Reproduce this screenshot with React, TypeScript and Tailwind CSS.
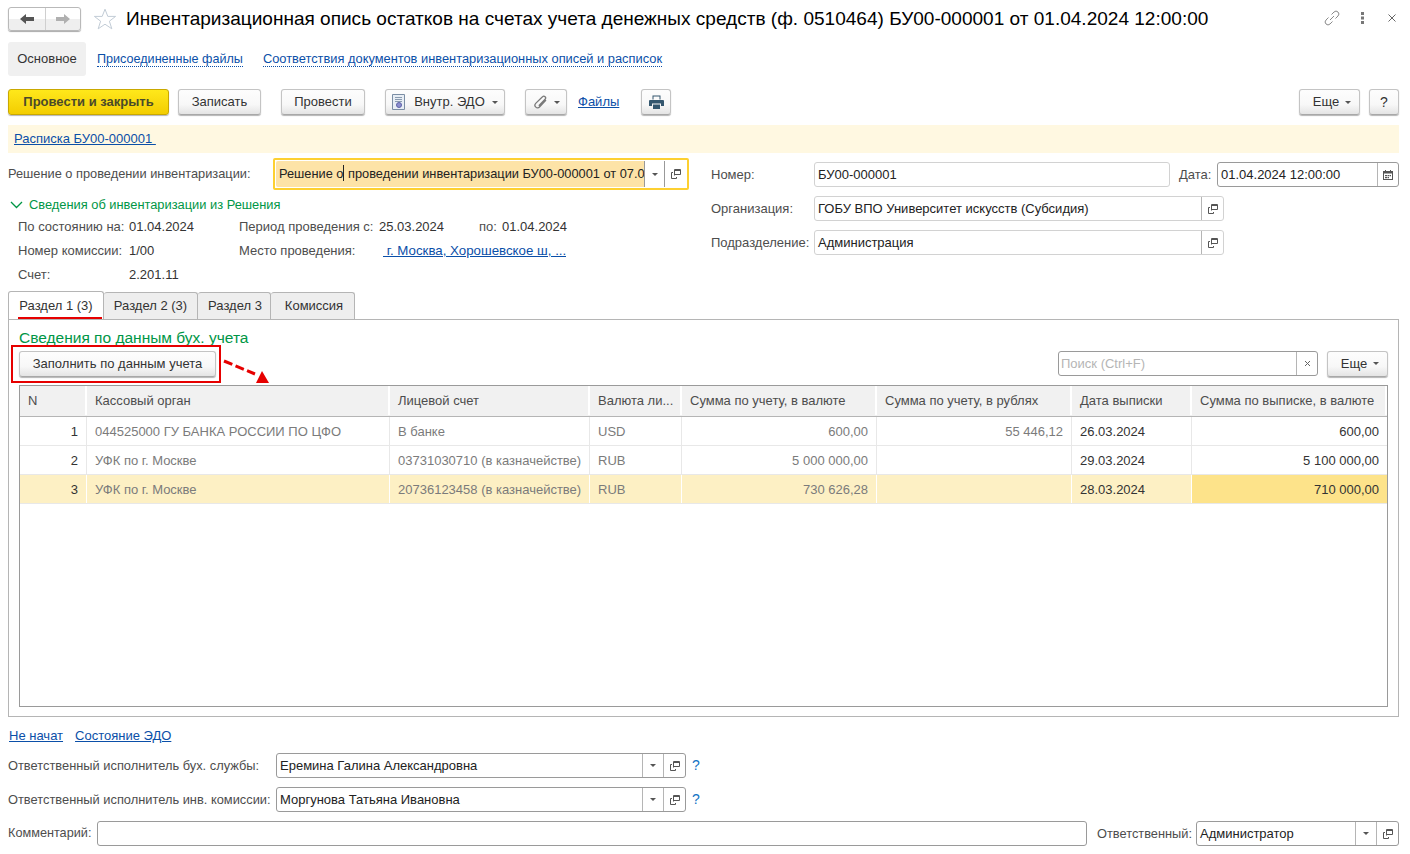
const btn =
  'flex h-[26px] items-center justify-center rounded-[3px] border border-[#c4c4c4] border-b-[#a8a8a8] bg-linear-to-b from-[#fdfdfd] via-[#f8f8f8] via-60% to-[#e4e4e4] text-[#333] shadow-[0_1px_1px_#b5b5b5]'
const link = 'text-[#0b4fa8] underline'

function Caret() {
  return <span className="h-0 w-0 border-x-[3px] border-t-[3px] border-x-transparent border-t-[#555]" />
}

function OpenIcon() {
  return (
    <svg width="10" height="10" viewBox="0 0 10 10" fill="none" stroke="#555" strokeWidth="1">
      <path d="M3.500 6.500V.5h6v5h-6" />
      <path d="M3 1.500h6" />
      <path d="M2 3.500H.5v6h5V8" />
    </svg>
  )
}

function CaretCell() {
  return (
    <span className="flex h-full w-[21px] flex-none items-center justify-center border-l border-[#b5b5b5]">
      <Caret />
    </span>
  )
}

function OpenCell() {
  return (
    <span className="flex h-full w-[22px] flex-none items-center justify-center border-l border-[#b5b5b5]">
      <OpenIcon />
    </span>
  )
}

function Field({ width, value, strong, select, open = true }: { width: string; value: string; strong?: boolean; select?: boolean; open?: boolean }) {
  return (
    <div className={`flex h-[25px] items-center rounded-[3px] border bg-white ${strong ? 'border-[#9a9a9a]' : 'border-[#d2d2d2]'} ${width}`}>
      <span className="min-w-0 flex-1 truncate pl-[3px] text-[#222]">{value}</span>
      {select && <CaretCell />}
      {open && <OpenCell />}
    </div>
  )
}

const columns = [
  { label: 'N', width: 'w-[67px]' },
  { label: 'Кассовый орган', width: 'w-[303px]' },
  { label: 'Лицевой счет', width: 'w-[200px]' },
  { label: 'Валюта ли...', width: 'w-[92px]' },
  { label: 'Сумма по учету, в валюте', width: 'w-[195px]' },
  { label: 'Сумма по учету, в рублях', width: 'w-[195px]' },
  { label: 'Дата выписки', width: 'w-[120px]' },
  { label: 'Сумма по выписке, в валюте', width: 'w-[195px]' },
]

const rows = [
  ['1', '044525000 ГУ БАНКА РОССИИ ПО ЦФО', 'В банке', 'USD', '600,00', '55 446,12', '26.03.2024', '600,00'],
  ['2', 'УФК по г. Москве', '03731030710 (в казначействе)', 'RUB', '5 000 000,00', '', '29.03.2024', '5 100 000,00'],
  ['3', 'УФК по г. Москве', '20736123458 (в казначействе)', 'RUB', '730 626,28', '', '28.03.2024', '710 000,00'],
]

function Row({ cells, selected }: { cells: string[]; selected: boolean }) {
  return (
    <div className={`flex h-[29px] border-b border-[#e8e8e8] ${selected ? 'bg-[#fdf0c4]' : 'bg-white'}`}>
      {cells.map((cell, i) => {
        const right = i === 0 || i === 4 || i === 5 || i === 7
        const dark = i === 0 || i >= 6
        return (
          <div
            key={i}
            className={`flex items-center border-r px-2 pt-[2px] ${columns[i].width} ${right ? 'justify-end' : ''} ${dark ? 'text-[#333]' : 'text-[#7b7b7b]'} ${i === 7 ? 'border-r-0' : selected ? 'border-white' : 'border-[#e8e8e8]'} ${selected && i === 7 ? 'bg-[#fde38a]' : ''}`}
          >
            <span className="whitespace-nowrap">{cell}</span>
          </div>
        )
      })}
    </div>
  )
}

export default function App() {
  return (
    <div className="h-[854px] w-[1410px] overflow-hidden bg-white font-['Liberation_Sans',Arial,sans-serif] text-[13px] text-[#4d4d4d]">
      {/* title */}
      <div className="flex h-[42px] items-start pl-2 pr-[14px] pt-[7px]">
        <div className="flex h-[24px] w-[73px] rounded-[3px] border border-[#b9b9b9] bg-linear-to-b from-white from-50% to-[#efefef] to-50% shadow-[0_1px_1px_#aaa]">
          <span className="flex h-full w-[37px] items-center justify-center border-r border-[#cfcfcf]">
            <svg width="14" height="10" viewBox="0 0 14 10" fill="#555"><path d="M0 5 6 0v3h8v4H6v3z" /></svg>
          </span>
          <span className="flex h-full w-[35px] items-center justify-center">
            <svg width="14" height="10" viewBox="0 0 14 10" fill="#b0b0b0"><path d="M14 5 8 0v3H0v4h8v3z" /></svg>
          </span>
        </div>
        <svg className="ml-[12px] mt-[1px]" width="24" height="22" viewBox="0 0 24 22" fill="#fff" stroke="#c2ccd6">
          <path d="M12 1.200 14.800 8.400H22.600L16.400 13.200 18.800 20.800 12 16.200 5.200 20.800 7.600 13.200 1.400 8.400H9.200Z" />
        </svg>
        <h1 className="ml-[9px] flex-1 whitespace-nowrap text-[19.05px] leading-6 text-black">
          Инвентаризационная опись остатков на счетах учета денежных средств (ф. 0510464) БУ00-000001 от 01.04.2024 12:00:00
        </h1>
        <div className="mt-[3px] flex items-center">
          <svg width="16" height="16" viewBox="0 0 16 16" fill="none" stroke="#8a8a8a" strokeWidth="1">
            <path d="M6 10 10 6M7.500 4.500l2.500-2.500a2.800 2.800 0 0 1 4 4L11.500 8.500M8.500 11.500 6 14a2.800 2.800 0 0 1-4-4L4.500 7.500" />
          </svg>
          <svg className="ml-[20px]" width="4" height="12" viewBox="0 0 4 12" fill="#777">
            <rect x="1" y="0" width="3" height="3" /><rect x="1" y="4.500" width="3" height="3" /><rect x="1" y="9" width="3" height="3" />
          </svg>
          <svg className="ml-[24px]" width="8" height="8" viewBox="0 0 8 8" stroke="#666" strokeWidth="1">
            <path d="M.5.500l7 7M7.500.500l-7 7" />
          </svg>
        </div>
      </div>

      {/* page tabs */}
      <div className="flex h-[34px] items-center pl-2">
        <span className="flex h-full w-[78px] items-center justify-center rounded-[3px] bg-[#f0f0f0] text-[#333]">Основное</span>
        <a className="ml-[11px] mt-[1px] border-b border-dotted border-[#0b4fa8] text-[12.6px] leading-[14px] text-[#0b4fa8]">Присоединенные файлы</a>
        <a className="ml-5 mt-[1px] border-b border-dotted border-[#0b4fa8] text-[12.85px] leading-[14px] text-[#0b4fa8]">Соответствия документов инвентаризационных описей и расписок</a>
      </div>

      {/* command bar */}
      <div className="mt-[13px] flex items-center pl-2 pr-[11px]">
        <button className="flex h-[26px] w-[161px] items-center justify-center rounded-[3px] border border-[#c9a800] bg-linear-to-b from-[#ffe81a] to-[#f3cd00] font-bold text-[#4a4a2a] shadow-[0_1px_1px_#b5b5b5]">
          Провести и закрыть
        </button>
        <button className={`${btn} ml-[9px] w-[83px]`}>Записать</button>
        <button className={`${btn} ml-5 w-[84px]`}>Провести</button>
        <button className={`${btn} ml-5 w-[120px] gap-[7px]`}>
          <svg width="13" height="16" viewBox="0 0 13 16" fill="#e8eef5" stroke="#7b8ea5">
            <path d="M.5.500h12v15H.5z" />
            <path d="M3 3.500h7M3 5.500h7M3 7.500h7" stroke="#8a9bb0" />
            <circle cx="7" cy="11" r="2.500" fill="#8c8fd0" stroke="#5f63a8" />
          </svg>
          <span className="ml-[2px]">Внутр. ЭДО</span>
          <Caret />
        </button>
        <button className={`${btn} ml-5 w-[42px] gap-[6px]`}>
          <svg width="15" height="15" viewBox="0 0 15 15" fill="none" stroke="#7a7a7a" strokeWidth="1.300">
            <path d="M13 5 6.500 12a2.600 2.600 0 0 1-3.800-3.600L9.500 1.800a1.800 1.800 0 0 1 2.600 2.500L5.800 10.700" />
          </svg>
          <Caret />
        </button>
        <a className={`ml-[11px] ${link}`}>Файлы</a>
        <button className={`${btn} ml-[22px] w-[30px]`}>
          <svg width="15" height="14" viewBox="0 0 15 14" fill="#34576f">
            <path d="M3.500.500h8v4h-1v-3h-6v3h-1zM1 5h13a1 1 0 0 1 1 1v5h-3V8.500H3V11H0V6a1 1 0 0 1 1-1zM4 9.500h7V14H4z" />
          </svg>
        </button>
        <div className="flex-1" />
        <button className={`${btn} w-[61px] gap-[6px] pl-[5px]`}>
          Еще
          <Caret />
        </button>
        <button className={`${btn} ml-[9px] w-[30px] text-[14px]`}>?</button>
      </div>

      {/* message bar */}
      <div className="ml-2 mr-[11px] mt-[10px] flex h-[28px] items-center bg-[#fff8e1] pl-[6px]">
        <a className={link}>Расписка БУ00-000001&nbsp;</a>
      </div>

      {/* header form */}
      <div className="flex pl-2 pr-[11px] pt-[5px]">
        <div className="w-[703px]">
          <div className="flex h-[32px] items-center">
            <span className="w-[265px] text-[12.8px]">Решение о проведении инвентаризации:</span>
            <div className="flex h-[32px] w-[416px] items-center rounded-[2px] border-2 border-[#fdd031] p-[1px]">
              <div className="flex h-full w-full items-center">
                <span className="h-full w-[368px] flex-none overflow-hidden whitespace-nowrap rounded-l-[2px] bg-[#fde3a7] pl-[3px] text-[12.8px] leading-[26px] text-[#222]">
                  Решение о<span className="inline-block h-[16px] w-[1px] translate-y-[3px] bg-[#222]" /> проведении инвентаризации БУ00-000001 от 07.04.2024
                </span>
                <span className="flex h-full w-[20px] flex-none items-center justify-center border-l border-[#999]">
                  <Caret />
                </span>
                <span className="flex h-full w-[22px] flex-none items-center justify-center border-l border-[#999]">
                  <OpenIcon />
                </span>
              </div>
            </div>
          </div>

          <div className="mt-[6px] flex h-[18px] items-center text-[12.85px] text-[#009646]">
            <svg className="ml-[2px]" width="13" height="8" viewBox="0 0 13 8" fill="none" stroke="#009646" strokeWidth="1.300">
              <path d="M1 1l5.500 5.500L12 1" />
            </svg>
            <span className="ml-[6px]">Сведения об инвентаризации из Решения</span>
          </div>

          <div className="mt-[1px] pl-[10px]">
            <div className="flex h-[24px] items-center">
              <span className="w-[111px]">По состоянию на:</span>
              <span className="w-[110px] text-[#333]">01.04.2024</span>
              <span className="w-[140px]">Период проведения с:</span>
              <span className="w-[100px] text-[#333]">25.03.2024</span>
              <span className="w-[23px]">по:</span>
              <span className="text-[#333]">01.04.2024</span>
            </div>
            <div className="flex h-[24px] items-center">
              <span className="w-[111px]">Номер комиссии:</span>
              <span className="w-[110px] text-[#333]">1/00</span>
              <span className="w-[144px]">Место проведения:</span>
              <a className={`w-[183px] overflow-hidden whitespace-nowrap text-[13.3px] ${link}`}>&nbsp;г. Москва, Хорошевское ш, ...</a>
            </div>
            <div className="flex h-[24px] items-center">
              <span className="w-[111px]">Счет:</span>
              <span className="text-[#333]">2.201.11</span>
            </div>
          </div>
        </div>

        <div className="pt-[4px]">
          <div className="flex h-[25px] items-center">
            <span className="w-[103px]">Номер:</span>
            <Field width="w-[356px]" value="БУ00-000001" open={false} />
            <span className="ml-[9px] w-[38px]">Дата:</span>
            <div className="flex h-[25px] w-[182px] items-center rounded-[3px] border border-[#9a9a9a]">
              <span className="flex-1 pl-[3px] text-[#222]">01.04.2024 12:00:00</span>
              <span className="flex h-full w-[21px] items-center justify-center border-l border-[#b5b5b5]">
                <svg width="10" height="10" viewBox="0 0 10 10" fill="#555">
                  <path d="M2 0h1v1h4V0h1v1h2v9H0V1h2zM1 3.500v5.500h8V3.500z" />
                  <path d="M2 5h2v1.200H2zM4.500 5h1.500v1.200H4.500zM6.500 5h1.500v1.200H6.500zM2 7h2v1.200H2zM4.500 7h1.500v1.200H4.500z" />
                </svg>
              </span>
            </div>
          </div>
          <div className="mt-[9px] flex h-[25px] items-center">
            <span className="w-[103px]">Организация:</span>
            <Field width="w-[410px]" value="ГОБУ ВПО Университет искусств (Субсидия)" />
          </div>
          <div className="mt-[9px] flex h-[25px] items-center">
            <span className="w-[103px]">Подразделение:</span>
            <Field width="w-[410px]" value="Администрация" />
          </div>
        </div>
      </div>

      {/* tabs */}
      <div className="mt-[4px] flex h-[28px] items-end pl-2">
        <div className="relative z-10 flex h-[28px] w-[96px] items-center justify-center rounded-t-[3px] border border-b-0 border-[#b5b5b5] bg-white text-[#333]">
          Раздел 1 (3)
          <span className="absolute bottom-0 left-[9px] h-[2px] w-[84px] bg-[#e60000]" />
        </div>
        <div className="flex h-[27px] w-[94px] items-center justify-center rounded-t-[3px] border border-b-0 border-l-0 border-[#b5b5b5] bg-[#eeeeee] text-[#333]">Раздел 2 (3)</div>
        <div className="flex h-[27px] w-[73px] items-center justify-center rounded-t-[3px] border border-b-0 border-l-0 border-[#b5b5b5] bg-[#eeeeee] pl-[2px] text-[#333]">Раздел 3</div>
        <div className="flex h-[27px] w-[84px] items-center justify-center rounded-t-[3px] border border-b-0 border-l-0 border-[#b5b5b5] bg-[#eeeeee] pl-[3px] text-[#333]">Комиссия</div>
      </div>
      <div className="relative mx-2 mr-[11px] h-[398px] border border-[#b5b5b5] px-[10px]">
        <div className="mt-[9px] h-[18px] text-[15.500px] leading-[18px] text-[#009646]">Сведения по данным бух. учета</div>
        <div className="relative mt-[3px] flex h-[27px] items-center justify-between">
          <button className={`${btn} w-[197px]`}>Заполнить по данным учета</button>
          <div className="flex items-center">
            <div className="flex h-[25px] w-[260px] items-center rounded-[3px] border border-[#9a9a9a]">
              <span className="flex-1 pl-[2px] text-[#b5b5b5]">Поиск (Ctrl+F)</span>
              <span className="flex h-full w-[21px] items-center justify-center border-l border-[#b5b5b5]">
                <svg width="7" height="7" viewBox="0 0 7 7" stroke="#666"><path d="M1 1l5 5M6 1 1 6" /></svg>
              </span>
            </div>
            <button className={`${btn} ml-[9px] w-[61px] gap-[6px] pl-[5px]`}>
              Еще
              <Caret />
            </button>
          </div>
        </div>
        <div className="absolute left-[2px] top-[25px] h-[38px] w-[210px] border-2 border-[#e60000]" />
        <svg className="absolute left-[213px] top-[38px]" width="50" height="28" viewBox="0 0 50 28" fill="#e60000">
          <path d="M2 3 33 16" stroke="#e60000" strokeWidth="3" strokeDasharray="9 3.500" fill="none" />
          <path d="M40 13 47 25H34Z" />
        </svg>

        <div className="mt-[8px] h-[322px] border border-[#9a9a9a]">
          <div className="flex h-[31px] border-b border-[#b5b5b5] bg-[#f1f1f1] pb-[1px]">
            {columns.map((col, i) => (
              <div key={col.label} className={`flex items-center border-r-2 border-white px-2 whitespace-nowrap ${col.width} ${i === 7 ? 'border-r-0' : ''}`}>
                {col.label}
              </div>
            ))}
          </div>
          {rows.map((cells, i) => (
            <Row key={cells[0]} cells={cells} selected={i === 2} />
          ))}
        </div>
      </div>

      {/* footer */}
      <div className="mt-[12px] flex h-[14px] items-center pl-[9px]">
        <a className={link}>Не начат</a>
        <a className={`ml-3 ${link}`}>Состояние ЭДО</a>
      </div>
      <div className="mt-[10px] flex h-[25px] items-center pl-2">
        <span className="w-[268px] text-[12.85px]">Ответственный исполнитель бух. службы:</span>
        <Field width="w-[410px]" value="Еремина Галина Александровна" strong select />
        <span className="ml-[6px] text-[14px] text-[#1273c4]">?</span>
      </div>
      <div className="mt-[9px] flex h-[25px] items-center pl-2">
        <span className="w-[268px] text-[12.85px]">Ответственный исполнитель инв. комиссии:</span>
        <Field width="w-[410px]" value="Моргунова Татьяна Ивановна" strong select />
        <span className="ml-[6px] text-[14px] text-[#1273c4]">?</span>
      </div>
      <div className="mt-[9px] flex h-[25px] items-center pl-2">
        <span className="w-[89px] text-[12.7px]">Комментарий:</span>
        <div className="h-[25px] w-[990px] rounded-[3px] border border-[#9a9a9a]" />
        <span className="ml-[10px] w-[99px] text-[12.8px]">Ответственный:</span>
        <Field width="w-[203px]" value="Администратор" strong select />
      </div>
    </div>
  )
}
